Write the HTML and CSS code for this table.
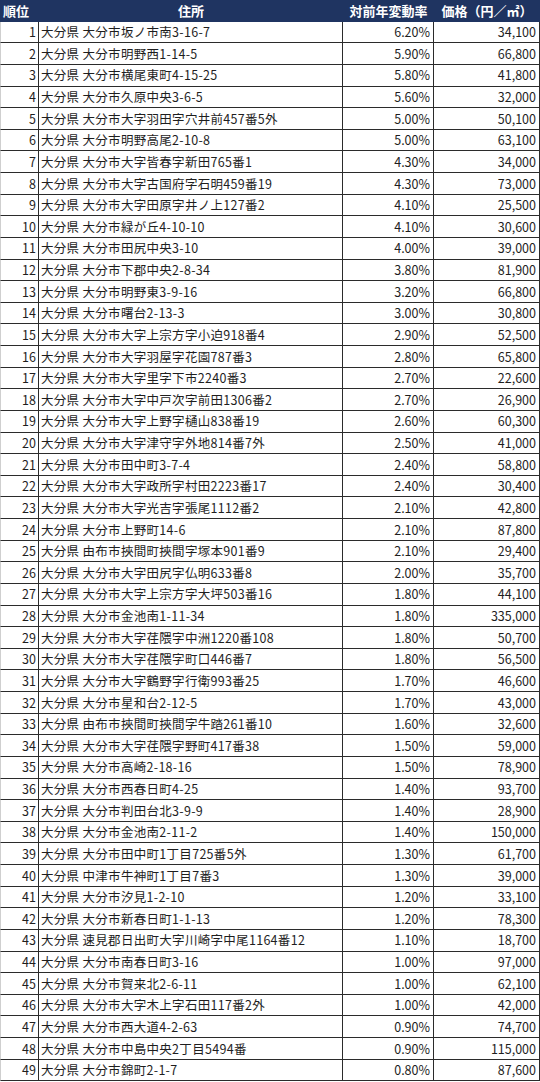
FILE: index.html
```html
<!DOCTYPE html>
<html lang="ja">
<head>
<meta charset="utf-8">
<link rel="stylesheet" href="styles.css">
</head>
<body>
<div class="sheet">
<div class="h rank">順位</div><div class="h addr">住所</div><div class="h rate">対前年変動率</div><div class="h price">価格（円／㎡）</div>
<div class="c rank">1</div><div class="c addr">大分県 大分市坂ノ市南3-16-7</div><div class="c num">6.20%</div><div class="c num last">34,100</div>
<div class="c rank">2</div><div class="c addr">大分県 大分市明野西1-14-5</div><div class="c num">5.90%</div><div class="c num last">66,800</div>
<div class="c rank">3</div><div class="c addr">大分県 大分市横尾東町4-15-25</div><div class="c num">5.80%</div><div class="c num last">41,800</div>
<div class="c rank">4</div><div class="c addr">大分県 大分市久原中央3-6-5</div><div class="c num">5.60%</div><div class="c num last">32,000</div>
<div class="c rank">5</div><div class="c addr">大分県 大分市大字羽田字穴井前457番5外</div><div class="c num">5.00%</div><div class="c num last">50,100</div>
<div class="c rank">6</div><div class="c addr">大分県 大分市明野高尾2-10-8</div><div class="c num">5.00%</div><div class="c num last">63,100</div>
<div class="c rank">7</div><div class="c addr">大分県 大分市大字皆春字新田765番1</div><div class="c num">4.30%</div><div class="c num last">34,000</div>
<div class="c rank">8</div><div class="c addr">大分県 大分市大字古国府字石明459番19</div><div class="c num">4.30%</div><div class="c num last">73,000</div>
<div class="c rank">9</div><div class="c addr">大分県 大分市大字田原字井ノ上127番2</div><div class="c num">4.10%</div><div class="c num last">25,500</div>
<div class="c rank">10</div><div class="c addr">大分県 大分市緑が丘4-10-10</div><div class="c num">4.10%</div><div class="c num last">30,600</div>
<div class="c rank">11</div><div class="c addr">大分県 大分市田尻中央3-10</div><div class="c num">4.00%</div><div class="c num last">39,000</div>
<div class="c rank">12</div><div class="c addr">大分県 大分市下郡中央2-8-34</div><div class="c num">3.80%</div><div class="c num last">81,900</div>
<div class="c rank">13</div><div class="c addr">大分県 大分市明野東3-9-16</div><div class="c num">3.20%</div><div class="c num last">66,800</div>
<div class="c rank">14</div><div class="c addr">大分県 大分市曙台2-13-3</div><div class="c num">3.00%</div><div class="c num last">30,800</div>
<div class="c rank">15</div><div class="c addr">大分県 大分市大字上宗方字小迫918番4</div><div class="c num">2.90%</div><div class="c num last">52,500</div>
<div class="c rank">16</div><div class="c addr">大分県 大分市大字羽屋字花園787番3</div><div class="c num">2.80%</div><div class="c num last">65,800</div>
<div class="c rank">17</div><div class="c addr">大分県 大分市大字里字下市2240番3</div><div class="c num">2.70%</div><div class="c num last">22,600</div>
<div class="c rank">18</div><div class="c addr">大分県 大分市大字中戸次字前田1306番2</div><div class="c num">2.70%</div><div class="c num last">26,900</div>
<div class="c rank">19</div><div class="c addr">大分県 大分市大字上野字樋山838番19</div><div class="c num">2.60%</div><div class="c num last">60,300</div>
<div class="c rank">20</div><div class="c addr">大分県 大分市大字津守字外地814番7外</div><div class="c num">2.50%</div><div class="c num last">41,000</div>
<div class="c rank">21</div><div class="c addr">大分県 大分市田中町3-7-4</div><div class="c num">2.40%</div><div class="c num last">58,800</div>
<div class="c rank">22</div><div class="c addr">大分県 大分市大字政所字村田2223番17</div><div class="c num">2.40%</div><div class="c num last">30,400</div>
<div class="c rank">23</div><div class="c addr">大分県 大分市大字光吉字張尾1112番2</div><div class="c num">2.10%</div><div class="c num last">42,800</div>
<div class="c rank">24</div><div class="c addr">大分県 大分市上野町14-6</div><div class="c num">2.10%</div><div class="c num last">87,800</div>
<div class="c rank">25</div><div class="c addr">大分県 由布市挾間町挾間字塚本901番9</div><div class="c num">2.10%</div><div class="c num last">29,400</div>
<div class="c rank">26</div><div class="c addr">大分県 大分市大字田尻字仏明633番8</div><div class="c num">2.00%</div><div class="c num last">35,700</div>
<div class="c rank">27</div><div class="c addr">大分県 大分市大字上宗方字大坪503番16</div><div class="c num">1.80%</div><div class="c num last">44,100</div>
<div class="c rank">28</div><div class="c addr">大分県 大分市金池南1-11-34</div><div class="c num">1.80%</div><div class="c num last">335,000</div>
<div class="c rank">29</div><div class="c addr">大分県 大分市大字荏隈字中洲1220番108</div><div class="c num">1.80%</div><div class="c num last">50,700</div>
<div class="c rank">30</div><div class="c addr">大分県 大分市大字荏隈字町口446番7</div><div class="c num">1.80%</div><div class="c num last">56,500</div>
<div class="c rank">31</div><div class="c addr">大分県 大分市大字鶴野字行衛993番25</div><div class="c num">1.70%</div><div class="c num last">46,600</div>
<div class="c rank">32</div><div class="c addr">大分県 大分市星和台2-12-5</div><div class="c num">1.70%</div><div class="c num last">43,000</div>
<div class="c rank">33</div><div class="c addr">大分県 由布市挾間町挾間字牛踏261番10</div><div class="c num">1.60%</div><div class="c num last">32,600</div>
<div class="c rank">34</div><div class="c addr">大分県 大分市大字荏隈字野町417番38</div><div class="c num">1.50%</div><div class="c num last">59,000</div>
<div class="c rank">35</div><div class="c addr">大分県 大分市高崎2-18-16</div><div class="c num">1.50%</div><div class="c num last">78,900</div>
<div class="c rank">36</div><div class="c addr">大分県 大分市西春日町4-25</div><div class="c num">1.40%</div><div class="c num last">93,700</div>
<div class="c rank">37</div><div class="c addr">大分県 大分市判田台北3-9-9</div><div class="c num">1.40%</div><div class="c num last">28,900</div>
<div class="c rank">38</div><div class="c addr">大分県 大分市金池南2-11-2</div><div class="c num">1.40%</div><div class="c num last">150,000</div>
<div class="c rank">39</div><div class="c addr">大分県 大分市田中町1丁目725番5外</div><div class="c num">1.30%</div><div class="c num last">61,700</div>
<div class="c rank">40</div><div class="c addr">大分県 中津市牛神町1丁目7番3</div><div class="c num">1.30%</div><div class="c num last">39,000</div>
<div class="c rank">41</div><div class="c addr">大分県 大分市汐見1-2-10</div><div class="c num">1.20%</div><div class="c num last">33,100</div>
<div class="c rank">42</div><div class="c addr">大分県 大分市新春日町1-1-13</div><div class="c num">1.20%</div><div class="c num last">78,300</div>
<div class="c rank">43</div><div class="c addr">大分県 速見郡日出町大字川崎字中尾1164番12</div><div class="c num">1.10%</div><div class="c num last">18,700</div>
<div class="c rank">44</div><div class="c addr">大分県 大分市南春日町3-16</div><div class="c num">1.00%</div><div class="c num last">97,000</div>
<div class="c rank">45</div><div class="c addr">大分県 大分市賀来北2-6-11</div><div class="c num">1.00%</div><div class="c num last">62,100</div>
<div class="c rank">46</div><div class="c addr">大分県 大分市大字木上字石田117番2外</div><div class="c num">1.00%</div><div class="c num last">42,000</div>
<div class="c rank">47</div><div class="c addr">大分県 大分市西大道4-2-63</div><div class="c num">0.90%</div><div class="c num last">74,700</div>
<div class="c rank">48</div><div class="c addr">大分県 大分市中島中央2丁目5494番</div><div class="c num">0.90%</div><div class="c num last">115,000</div>
<div class="c rank">49</div><div class="c addr">大分県 大分市錦町2-1-7</div><div class="c num">0.80%</div><div class="c num last">87,600</div>
</div>
</body>
</html>
```
FILE: styles.css
```css
html, body {
  margin: 0;
  padding: 0;
  background: #ffffff;
}

.sheet {
  width: 540px;
  display: grid;
  grid-template-columns: 39px 304px 91px 106px;
  grid-auto-rows: 21.64px;
  font-family: "Noto Sans CJK JP", "Noto Sans", sans-serif;
  font-size: 12.5px;
  color: #1e1e1e;
}

.h {
  background: #1f3461;
  color: #ffffff;
  font-weight: 700;
  font-size: 13px;
  display: flex;
  align-items: center;
  justify-content: center;
  white-space: nowrap;
}

.h.rank {
  justify-content: flex-start;
  padding-left: 3px;
}

.c {
  box-sizing: border-box;
  border-right: 1px solid #2b2b2b;
  border-bottom: 1px solid #2b2b2b;
  display: flex;
  align-items: center;
  white-space: nowrap;
  line-height: 1;
  padding-top: 1px;
}

.c.rank {
  justify-content: flex-end;
  padding-right: 2px;
  border-left: 1px solid #cfcfcf;
}

.c.addr {
  justify-content: flex-start;
  padding-left: 2px;
  letter-spacing: 0.3px;
}

.c.num {
  justify-content: flex-end;
  padding-right: 3px;
}
```
